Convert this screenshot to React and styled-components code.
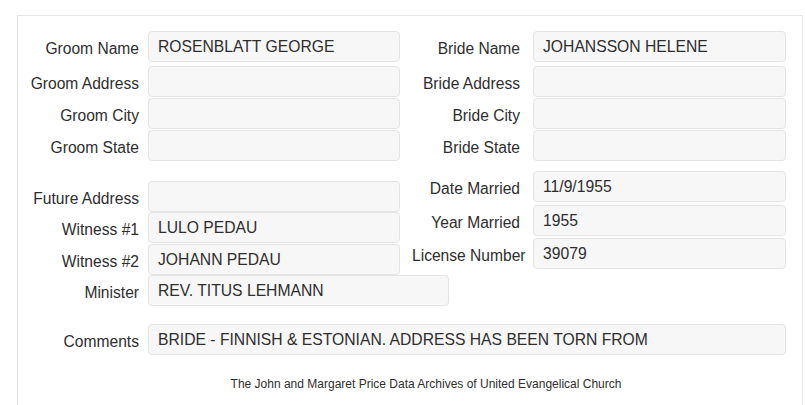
import styled, { createGlobalStyle } from "styled-components";

const GlobalStyle = createGlobalStyle`
  body {
    margin: 0;
    background: #fff;
    font-family: "Liberation Sans", Arial, sans-serif;
    color: #333;
  }
`;

const leftTop = [
  { label: "Groom Name", value: "ROSENBLATT GEORGE", mb: 4 },
  { label: "Groom Address", value: "", mb: 1 },
  { label: "Groom City", value: "", mb: 1 },
  { label: "Groom State", value: "", mb: 0 },
];

const rightTop = [
  { label: "Bride Name", value: "JOHANSSON HELENE", mb: 4 },
  { label: "Bride Address", value: "", mb: 1 },
  { label: "Bride City", value: "", mb: 1 },
  { label: "Bride State", value: "", mb: 0 },
];

const leftBottom = [
  { label: "Future Address", value: "", mb: 0 },
  { label: "Witness #1", value: "LULO PEDAU", mb: 1 },
  { label: "Witness #2", value: "JOHANN PEDAU", mb: 0 },
  { label: "Minister", value: "REV. TITUS LEHMANN", mb: 0, wide: true },
];

const rightBottom = [
  { label: "Date Married", value: "11/9/1955", mb: 3 },
  { label: "Year Married", value: "1955", mb: 2 },
  { label: "License Number", value: "39079", mb: 0 },
];

function Field({ label, value, mb, side, width }) {
  return (
    <Row $mb={mb}>
      <Label $side={side}>{label}</Label>
      <Box $width={width}>{value}</Box>
    </Row>
  );
}

export default function App() {
  return (
    <Page>
      <GlobalStyle />
      <Panel>
        <Columns>
          <LeftColumn>
            <Group>
              {leftTop.map((f) => (
                <Field key={f.label} {...f} side="left" width={252} />
              ))}
            </Group>
            <Group $top={20}>
              {leftBottom.map((f) => (
                <Field
                  key={f.label}
                  {...f}
                  side="left"
                  width={f.wide ? 301 : 252}
                />
              ))}
            </Group>
          </LeftColumn>
          <RightColumn>
            <Group>
              {rightTop.map((f) => (
                <Field key={f.label} {...f} side="right" width={253} />
              ))}
            </Group>
            <Group $top={10}>
              {rightBottom.map((f) => (
                <Field key={f.label} {...f} side="right" width={253} />
              ))}
            </Group>
          </RightColumn>
        </Columns>
        <CommentsRow>
          <Field
            label="Comments"
            value="BRIDE - FINNISH & ESTONIAN. ADDRESS HAS BEEN TORN FROM"
            mb={0}
            side="left"
            width={638}
          />
        </CommentsRow>
        <Footer>
          The John and Margaret Price Data Archives of United Evangelical Church
        </Footer>
      </Panel>
    </Page>
  );
}

const Page = styled.div`
  padding: 15px 0 0 17px;
  height: 390px;
  overflow: hidden;
`;

const Panel = styled.div`
  box-sizing: border-box;
  width: 786px;
  min-height: 400px;
  border: 1px solid #e6e6e6;
  border-bottom: none;
  padding-top: 15px;
`;

const Columns = styled.div`
  display: flex;
  align-items: flex-start;
`;

const LeftColumn = styled.div`
  width: 383px;
  flex-shrink: 0;
  position: relative;
  z-index: 1;
`;

const RightColumn = styled.div`
  padding-left: 11px;
`;

const Group = styled.div`
  display: flex;
  flex-direction: column;
  margin-top: ${(p) => p.$top || 0}px;
`;

const Row = styled.div`
  display: flex;
  align-items: center;
  margin-bottom: ${(p) => p.$mb}px;
`;

const Label = styled.div`
  box-sizing: border-box;
  flex-shrink: 0;
  width: ${(p) => (p.$side === "right" ? 108 : 121)}px;
  margin-right: ${(p) => (p.$side === "right" ? 13 : 9)}px;
  padding-top: 4px;
  text-align: right;
  white-space: nowrap;
  font-size: 15.6px;
  color: #2e2e2e;
`;

const Box = styled.div`
  box-sizing: border-box;
  flex-shrink: 0;
  width: ${(p) => p.$width}px;
  height: 31px;
  padding: 0 9px;
  display: flex;
  align-items: center;
  background: #f7f7f7;
  border: 1px solid #e4e4e4;
  border-radius: 4px;
  font-size: 15.7px;
  color: #2e2e2e;
  white-space: nowrap;
  overflow: hidden;
`;

const CommentsRow = styled.div`
  margin-top: 18px;
`;

const Footer = styled.div`
  margin-top: 22px;
  padding-left: 32px;
  text-align: center;
  font-size: 12px;
  line-height: 14px;
  color: #2e2e2e;
`;
